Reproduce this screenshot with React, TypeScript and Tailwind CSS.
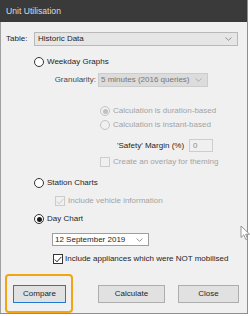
import React from 'react';

const font = { fontFamily: '"Liberation Sans", Arial, sans-serif' };

const Chevron: React.FC<{ color?: string }> = ({ color = '#6b6b6b' }) => (
  <svg width="7" height="4" viewBox="0 0 7 4" className="shrink-0">
    <path d="M0.5 0.5 L3.5 3.3 L6.5 0.5" fill="none" stroke={color} strokeWidth="0.9" />
  </svg>
);

const Radio: React.FC<{ checked?: boolean; disabled?: boolean }> = ({ checked, disabled }) => (
  <span
    className={`flex h-[10px] w-[10px] shrink-0 items-center justify-center rounded-full border ${
      disabled ? 'border-[#c4c4c4] bg-[#f0f0f0]' : 'border-[#333333] bg-white'
    }`}
  >
    {checked && (
      <span className={`h-[5px] w-[5px] rounded-full ${disabled ? 'bg-[#c0c0c0]' : 'bg-[#1a1a1a]'}`} />
    )}
  </span>
);

const Check: React.FC<{ checked?: boolean; disabled?: boolean }> = ({ checked, disabled }) => (
  <span
    className={`flex h-[10px] w-[10px] shrink-0 items-center justify-center border ${
      disabled ? 'border-[#cccccc] bg-[#f0f0f0]' : 'border-[#333333] bg-white'
    }`}
  >
    {checked && (
      <svg width="8" height="7" viewBox="0 0 8 7">
        <path
          d="M0.8 3.6 L3 5.8 L7.3 0.9"
          fill="none"
          stroke={disabled ? '#c6c6c6' : '#222222'}
          strokeWidth="1"
        />
      </svg>
    )}
  </span>
);

export default function App() {
  return (
    <div className="h-[316px] w-[250px] bg-white text-[8px] leading-none text-[#1e1e1e]" style={font}>
      <div className="flex h-[314px] w-[248px] flex-col border-r border-b border-[#8e8e8e]">
        <div className="flex h-[22px] shrink-0 items-center bg-[#3a3a3a] pl-[6px] text-[8.6px] text-[#dcdcdc]">
          Unit Utilisation
        </div>

        <div className="relative flex flex-1 flex-col border-l border-[#a0a0a0] bg-[#f0f0f0]">
          {/* Table */}
          <div className="mt-[10px] flex h-[14px] items-center">
            <span className="ml-[5px] w-[28px]">Table:</span>
            <div className="flex h-[14px] w-[204px] items-center justify-between border border-[#b9b9b9] bg-[#e6e6e6] pl-[3px] pr-[5px]">
              <span>Historic Data</span>
              <Chevron color="#8a8a8a" />
            </div>
          </div>

          {/* Weekday Graphs */}
          <div className="mt-[11px] ml-[33px] flex h-[10px] items-center gap-[3px]">
            <Radio />
            <span>Weekday Graphs</span>
          </div>

          <div className="mt-[6px] flex h-[14px] items-center">
            <span className="w-[97px] pr-[2px] text-right text-[#4a4a4a]">Granularity:</span>
            <div className="flex h-[14px] w-[110px] items-center justify-between border border-[#cccccc] bg-[#dcdcdc] pl-[2px] pr-[5px] text-[#777777]">
              <span>5 minutes (2016 queries)</span>
              <Chevron color="#a8a8a8" />
            </div>
          </div>

          <div className="mt-[19px] ml-[99px] flex h-[10px] items-center gap-[3px] text-[#a3a3a3]">
            <Radio checked disabled />
            <span>Calculation is duration-based</span>
          </div>
          <div className="mt-[4px] ml-[99px] flex h-[10px] items-center gap-[3px] text-[#a3a3a3]">
            <Radio disabled />
            <span>Calculation is instant-based</span>
          </div>

          <div className="mt-[9px] flex h-[13px] items-center">
            <span className="ml-[116px] w-[72px]">'Safety' Margin (%)</span>
            <div className="flex h-[13px] w-[24px] items-center border border-[#cdcdcd] bg-[#f0f0f0] pl-[3px] text-[#8c8c8c]">
              0
            </div>
          </div>

          <div className="mt-[5px] ml-[99px] flex h-[10px] items-center gap-[3px] text-[#a3a3a3]">
            <Check disabled />
            <span>Create an overlay for theming</span>
          </div>

          {/* Station Charts */}
          <div className="mt-[11px] ml-[33px] flex h-[10px] items-center gap-[3px]">
            <Radio />
            <span>Station Charts</span>
          </div>
          <div className="mt-[8px] ml-[54px] flex h-[10px] items-center gap-[3px] text-[#a3a3a3]">
            <Check checked disabled />
            <span>Include vehicle information</span>
          </div>

          {/* Day Chart */}
          <div className="mt-[8px] ml-[33px] flex h-[10px] items-center gap-[3px]">
            <Radio checked />
            <span>Day Chart</span>
          </div>
          <div className="mt-[9px] ml-[51px] flex h-[13px] w-[97px] items-center justify-between border border-[#9e9e9e] bg-white pl-[2px] pr-[5px]">
            <span>12 September 2019</span>
            <Chevron color="#8a8a8a" />
          </div>
          <div className="mt-[8px] ml-[52px] flex h-[10px] items-center gap-[2px]">
            <Check checked />
            <span>Include appliances which were NOT mobilised</span>
          </div>

          {/* Buttons */}
          <div className="mt-[21px] flex h-[18px] items-center">
            <div className="relative ml-[12px]">
              <div className="absolute -top-[11px] -left-[8px] h-[39px] w-[68px] rounded-[4px] border-2 border-[#f2a414]" />
              <button className="relative flex h-[18px] w-[53px] items-center justify-center border border-[#1f78d1] bg-[#e1e1e1]">
                Compare
              </button>
            </div>
            <button className="ml-[32px] flex h-[18px] w-[67px] items-center justify-center border border-[#adadad] bg-[#e1e1e1]">
              Calculate
            </button>
            <button className="ml-[13px] flex h-[18px] w-[61px] items-center justify-center border border-[#adadad] bg-[#e1e1e1]">
              Close
            </button>
          </div>

          {/* mouse pointer */}
          <svg
            className="absolute left-[239px] top-[203px]"
            width="11"
            height="16"
            viewBox="0 0 11 16"
          >
            <path
              d="M1 1 L1 12.5 L3.8 9.8 L5.8 14.5 L7.6 13.7 L5.7 9.2 L9.5 9.2 Z"
              fill="#ffffff"
              stroke="#8a8a8a"
              strokeWidth="0.9"
            />
          </svg>
        </div>
      </div>
    </div>
  );
}
